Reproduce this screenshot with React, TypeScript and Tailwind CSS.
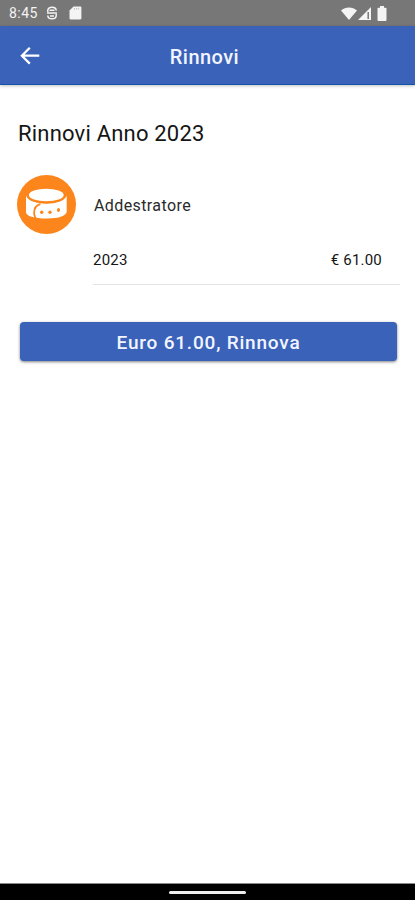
import type { ReactNode } from "react";

type Renewal = {
  year: string;
  price: string;
};

const renewals: Renewal[] = [{ year: "2023", price: "€ 61.00" }];

function StatusBar() {
  return (
    <div className="flex h-[26px] items-center bg-[#777777] pr-[28px] pl-[9px] text-[#f4f4f4]">
      <span className="w-[29px] text-[14px] leading-none tracking-[0.45px] whitespace-nowrap">8:45</span>
      <svg className="ml-[8px] h-[14px] w-[12px]" viewBox="0 0 12 14" fill="none" stroke="currentColor">
        <path d="M1.800 6V4.500C1.800 2.400 3.500 1.200 6 1.200s4.200 1.200 4.200 3.300M1.800 9.500c0 2.100 1.700 3.300 4.200 3.300s4.200-1.200 4.200-3.300V8" strokeWidth="1.500" />
        <path d="M3.500 4.300h5M1 7h10M4 10h4" strokeWidth="1.400" />
      </svg>
      <svg className="ml-[11px] h-[14px] w-[13px]" viewBox="0 0 13 14" fill="currentColor">
        <path d="M4.500.5h6.700c.7 0 1.200.5 1.200 1.200v10.600c0 .7-.5 1.200-1.200 1.200H1.700c-.7 0-1.200-.5-1.200-1.200V4.500z" />
        <path d="M5.500 2v1.500M7.500 2v1.500M9.500 2v1.500" stroke="#aaa" strokeWidth=".7" />
      </svg>
      <div className="ml-auto flex items-center">
        <svg className="h-[13px] w-[16px]" viewBox="0 0 16 13" fill="currentColor">
          <path d="M0 3.500C4.500-.5 11.500-.5 16 3.500L8 13z" />
        </svg>
        <svg className="ml-[1px] h-[13px] w-[14px]" viewBox="0 0 14 13">
          <path d="M0 13 13 0v13z" fill="currentColor" />
          <path d="M10.200 5v7" stroke="#777777" strokeWidth="1.500" />
        </svg>
        <svg className="ml-[5px] h-[15px] w-[10px]" viewBox="0 0 10 15" fill="currentColor">
          <path d="M3 0h4v1.700h1.600c.5 0 .9.400.9.900v11.500c0 .5-.4.900-.9.900H1.400c-.5 0-.9-.4-.9-.9V2.600c0-.5.4-.9.900-.9H3z" />
        </svg>
      </div>
    </div>
  );
}

function Header({ title }: { title: string }) {
  return (
    <header className="relative z-10 flex h-[59px] items-center justify-center border-b border-[#1454a8] bg-[#3962b8] shadow-[0_1px_3px_rgba(0,0,0,0.25)]">
      <button type="button" aria-label="Indietro" className="absolute top-[20px] left-[20px] text-white">
        <svg className="h-[20px] w-[20px]" viewBox="0 0 20 20" fill="none" stroke="currentColor" strokeWidth="2.300">
          <path d="M19.300 9.700H2.500M9.800 1.800 1.900 9.700l7.900 7.900" />
        </svg>
      </button>
      <h1 className="pt-[3px] pr-[6px] text-[20px] font-medium tracking-[0.45px] text-[#f2f5ff]">{title}</h1>
    </header>
  );
}

function CollarIcon() {
  return (
    <svg className="-ml-px size-[59px] shrink-0" viewBox="0 0 59 59">
      <circle cx="29.500" cy="29.500" r="29.500" fill="#fc851c" />
      {/* band */}
      <path
        d="M9 20.500C10.500 25.500 18 28.200 29.500 28.200S48 25.500 49.700 20.500V36.500c0 4.200-7.500 7-19.800 7-13 0-20.900-2.300-20.900-6.500z"
        fill="#fff"
      />
      {/* opening */}
      <ellipse cx="29.300" cy="20.800" rx="18.600" ry="8" fill="#fc851c" />
      <ellipse cx="29.300" cy="20" rx="17.400" ry="6.200" fill="#fff" />
      {/* overlapping strap end */}
      <path
        d="M20.500 45c-2.300-1.800-3.400-4-3.400-7 0-4.400 2.400-8 6.300-8.900"
        fill="none"
        stroke="#fc851c"
        strokeWidth="1.800"
      />
      <g fill="#fc851c">
        <circle cx="24.700" cy="37.300" r="1.700" />
        <circle cx="33" cy="37.300" r="1.700" />
        <ellipse cx="41.500" cy="35" rx="1.500" ry="2" />
      </g>
    </svg>
  );
}

function PrimaryButton({ children }: { children: ReactNode }) {
  return (
    <button
      type="button"
      className="mt-[37px] ml-[2px] h-[39px] w-[377px] rounded-[4px] bg-[#3962b8] pt-[3px] text-[19px] font-medium tracking-[0.8px] text-[#f2f5ff] shadow-[0_1px_3px_rgba(0,0,0,0.5)]"
    >
      {children}
    </button>
  );
}

export default function App() {
  return (
    <div className="flex h-[900px] w-[415px] flex-col overflow-hidden bg-white font-['Roboto',sans-serif] text-[#151515]">
      <StatusBar />
      <Header title="Rinnovi" />

      <main className="flex-1 pt-[33px] pl-[18px]">
        <h2 className="text-[22px] leading-[32px] tracking-[0.2px] whitespace-nowrap">Rinnovi Anno 2023</h2>

        <div className="mt-[25px] flex items-center gap-[18px]">
          <CollarIcon />
          <span className="pt-[2px] text-[16px] tracking-[0.4px] text-[#2a2a2a]">Addestratore</span>
        </div>

        {renewals.map((item) => (
          <div
            key={item.year}
            className="ml-[75px] flex h-[51px] w-[307px] items-center justify-between border-b border-[#e4e4e4] pt-[2px] pr-[18px] text-[15px]"
          >
            <span className="tracking-[0.2px]">{item.year}</span>
            <span className="tracking-[0.2px]">{item.price}</span>
          </div>
        ))}

        <PrimaryButton>Euro 61.00, Rinnova</PrimaryButton>
      </main>

      <footer className="flex h-[17px] items-center justify-center border-t border-[#888] bg-black">
        <div className="h-[3px] w-[77px] rounded-full bg-[#eeeeee]" />
      </footer>
    </div>
  );
}
